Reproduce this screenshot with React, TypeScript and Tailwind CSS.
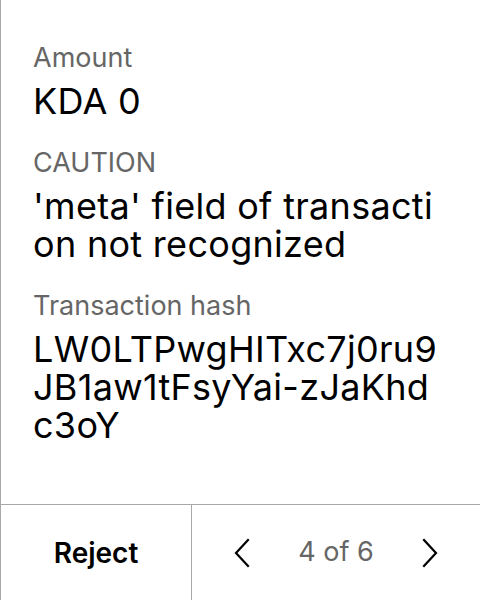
const fields = [
  { label: 'Amount', value: 'KDA 0' },
  { label: 'CAUTION', value: "'meta' field of transaction not recognized" },
  { label: 'Transaction hash', value: 'LW0LTPwgHITxc7j0ru9JB1aw1tFsyYai-zJaKhdc3oY' },
]

function Chevron({ dir }: { dir: 'left' | 'right' }) {
  return (
    <svg width="18" height="32" viewBox="0 0 18 32" fill="none" stroke="black" strokeWidth="2.2" strokeLinecap="square">
      {dir === 'left' ? <polyline points="15,3 3,16 15,29" /> : <polyline points="3,3 15,16 3,29" />}
    </svg>
  )
}

export default function App() {
  return (
    <div className="w-[480px] h-[600px] flex flex-col bg-white border-l border-[#a8a8a8] font-['Inter',sans-serif] text-black">
      <div className="flex-1 pt-[42px] pl-[32px] pr-[37px] flex flex-col gap-[27px]">
        {fields.map((f) => (
          <div key={f.label}>
            <div className="text-[27px] leading-[32px] text-[#666666] mb-[8px]">{f.label}</div>
            <div className="text-[36px] leading-[38px] tracking-[0.3px] break-all">{f.value}</div>
          </div>
        ))}
      </div>

      <div className="h-[96px] flex border-t border-[#a8a8a8]">
        <button className="w-[191px] border-r border-[#a8a8a8] flex items-center justify-center text-[28px] font-semibold">
          Reject
        </button>
        <div className="flex-1 flex items-center justify-center gap-8">
          <div className="w-12 flex justify-center">
            <Chevron dir="left" />
          </div>
          <span className="text-[27px] text-[#666666]">4 of 6</span>
          <div className="w-12 flex justify-center">
            <Chevron dir="right" />
          </div>
        </div>
      </div>
    </div>
  )
}
